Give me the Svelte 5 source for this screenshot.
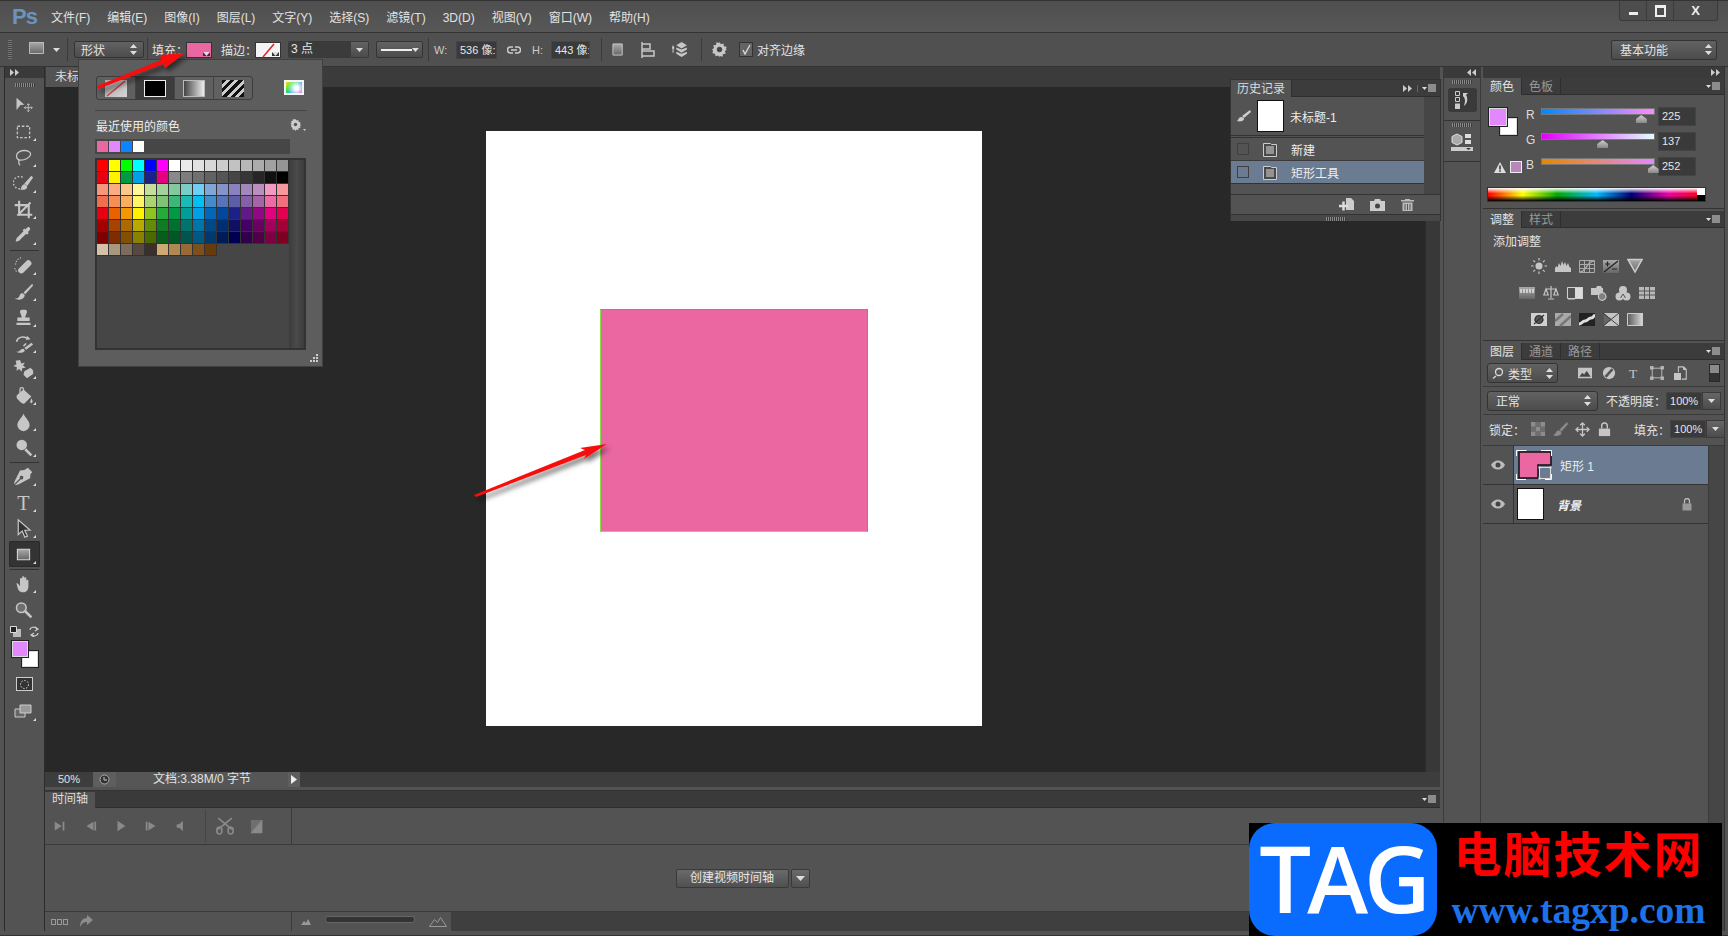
<script>
	const menus = ["文件(F)", "编辑(E)", "图像(I)", "图层(L)", "文字(Y)", "选择(S)", "滤镜(T)", "3D(D)", "视图(V)", "窗口(W)", "帮助(H)"];

	// toolbar icons, 24 box. f = filled path, s = stroked path
	const toolGroups = [
		[
			{ f: "M4 3L13 11L8.5 11.5L4 17Z", s: "M17.5 10v9M13 14.5h9M16 11.5l1.5-1.5 1.5 1.5M16 17.5l1.5 1.5 1.5-1.5M14.5 13l-1.5 1.5 1.5 1.5M20.5 13l1.5 1.5-1.5 1.5", w: 1 },
			{ s: "M5 6h14v13H5z", dash: "3 2", w: 1.5, mark: 1 },
			{ s: "M4 10c0-4 5-6 9-6s8 2 7 5-6 6-11 6-5-3-5-5zM6 14c2 2-1 4 2 7", w: 1.5, mark: 1 },
			{ s: "M11 5a7 7 0 1 0-3 13", dash: "2 2", w: 1.5, f: "M21 3L13 12l3 3L23 5zM10 15c2-3 5-3 6 0 1 3-3 5-8 4 2-1 1-3 2-4z", mark: 1 },
			{ s: "M7 2v16h15M2 7h16v15M20 4L5 19", w: 2.4, mark: 1 },
			{ f: "M16 3c2-2 5 1 3 3l-2 2 1 1-2 2-1-1-8 8-4 1 1-4 8-8-1-1 2-2 1 1z", mark: 1 }
		],
		[
			{ f: "M7 15L15 7a3.5 3.5 0 0 1 5 5L12 20a3.5 3.5 0 0 1-5-5z", s: "M3 11a8 8 0 0 1 7-8M4 19a8 8 0 0 1-2-4", dash: "1.5 1.5", w: 1.2, mark: 1 },
			{ f: "M22 3L12 13l2 2L23 5zM11 14c-3 0-3 2-4 4s-3 2-5 2c3 2 9 2 11-2 1-2 0-3-2-4z", mark: 1 },
			{ f: "M10 3h4a2 2 0 0 1 2 2c0 3-2 4-2 7h5v4H5v-4h5c0-3-2-4-2-7a2 2 0 0 1 2-2zM4 18h16v2.5H4z", mark: 1 },
			{ f: "M16 3l4 4-5 1zM21 11l2 2-8 6-2-2zM12 18c-2 0-3 1-4 2s-3 2-5 1c3 2 8 2 10 0 1-1 0-2-1-3z", s: "M4 10c1-5 7-7 12-4M15 12l-3 3", w: 1.8, mark: 1 },
			{ f: "M8 1l1.5 4 4-1-2 3.5 3 2.5-4 .5-.5 4-3-3-3 2 .5-4-4-1.5 3.5-2-1-4zM13 14l7-4 3 3v4l-7 5-4-4z", mark: 1 },
			{ f: "M5 11L12 5L21 13L13 21Q11 22 9 20L5 16Q3 13 5 11zM21 15c1 2 2 3 1 5-1 2-3 0-2-2z", s: "M8 9V5a2 2 0 0 1 4 0v4", mark: 1 },
			{ f: "M12 3c2 5 7 8 7 13a7 7 0 0 1-14 0c0-5 5-8 7-13z", mark: 1 },
			{ f: "M10 3a6 6 0 1 1 0 12a6 6 0 1 1 0-12z", s: "M14 14l7 7", w: 3, mark: 1 }
		],
		[
			{ f: "M17 2l5 5-2 2-.5 5L6 21l-4 1 7-7a2 2 0 1 0-1-1l-7 7 1-4 6-12 5-.5z", mark: 1 },
			{ t: "T", mark: 1 },
			{ s: "M6 2v17l4.5-4 3 7 3-1.3-3-6.7h6z", sf: "#333", w: 1.4, mark: 1 },
			{ f: "M5 6h14v12H5z", fc: "url(#gv)", s: "M5 6h14v12H5z", sc: "#d8d8d8", w: 1.2, mark: 1, active: 1 }
		],
		[
			{ f: "M4 12c1-1 2 0 4 3V7a1.2 1.2 0 0 1 2.4 0v4V5a1.2 1.2 0 0 1 2.4 0v6V6a1.2 1.2 0 0 1 2.4 0v6V9a1.2 1.2 0 0 1 2.4 0v6c0 4-2 7-6 7s-5-2-6-4z", mark: 1 },
			{ s: "M15 10a5.5 5.5 0 1 1-11 0a5.5 5.5 0 1 1 11 0z", sf: "#6e6e6e", w: 1.8, s2: "M14 14l7 7", w2: 3 }
		]
	];

	const adjustRows = [
		[
			{ f: "M8 4.5a3.5 3.5 0 1 1 0 7a3.5 3.5 0 1 1 0-7z", s: "M8 0v2.5M8 13.5V16M0 8h2.5M13.5 8H16M2.3 2.3l1.8 1.8M11.9 11.9l1.8 1.8M2.3 13.7l1.8-1.8M11.9 4.1l1.8-1.8", w: 1.2 },
			{ f: "M0 14V10l1.5-2 1 1.5L4 5l1.5 3L7 3l1.5 4L10 4l1.5 4L13 5l1.5 4L16 10v4z" },
			{ s: "M.5 2.5h15v12H.5zM5.5 2.5v12M10.5 2.5v12M.5 6.5h15M.5 10.5h15", w: 1, sc: "#aaa", s2: "M1 14c6 0 7-11 14-11", w2: 1.5 },
			{ f: "M0 2h16v13H0z", fc: "url(#gv)", s: "M2 6h5M4.5 3.5v5M9 11h5M1 14L15 3", sc: "#222", w: 1.2 },
			{ f: "M0 1h16L8 15z", fc: "url(#gv)", s: "M1 1.5h14L8 14z", sc: "#ccc", w: 1.5 }
		],
		[
			{ f: "M0 2h16v12H0z", fc: "url(#gv)", s: "M2 4v4M5 4v4M8 4v4M11 4v4M14 4v4", sc: "#e4e4e4", w: 1.5 },
			{ s: "M8 1v12M3 4h10M3 4L.8 10h4.4zM13 4l-2.2 6h4.4zM5 14h6", w: 1.2 },
			{ f: "M8 2h8v12H8z", fc: "#dcdcdc", s: "M.5 2.5h15v11H.5z", sf: "none", sc: "#d0d0d0", w: 1, s2: "M1 14h7", w2: 1 },
			{ f: "M0 3h5l1-2h4l1 2h1v7H0z", s: "M15 11.5a3.8 3.8 0 1 1-7.6 0a3.8 3.8 0 1 1 7.6 0z", sf: "#808080", sc: "#c6c6c6", w: 1.2 },
			{ f: "M8 1a4 4 0 1 1 0 8a4 4 0 1 1 0-8zM4.5 7.5a4 4 0 1 1 0 8a4 4 0 1 1 0-8zM11.5 7.5a4 4 0 1 1 0 8a4 4 0 1 1 0-8z", s: "M8 9L5.5 13M8 9l2.5 4", sc: "#555", w: 1 },
			{ f: "M0 2h16v12H0z", fc: "#b8b8b8", s: "M5.5 2v12M10.5 2v12M0 6h16M0 10h16", sc: "#555", w: 1 }
		],
		[
			{ f: "M0 2h16v13H0z", fc: "#d0d0d0", s: "M8 4.5a4 4 0 1 1-.1 0zM3 13L13 4", sf: "#555", sc: "#333", w: 1.2 },
			{ f: "M0 2h16v13H0z", fc: "#aaa", s: "M0 10L8 3M5 15L16 5", sc: "#777", w: 2.5 },
			{ f: "M0 2h16v13H0z", fc: "#222", s: "M0 13c3 0 3-3 6-3s3-3 6-3 2-2 4-3", sc: "#ddd", w: 3 },
			{ f: "M0 2h16v13H0z", fc: "#c4c4c4", s: "M0 2l16 13M16 2L0 15M0 2l8 6.5L0 15z", sf: "#666", sc: "#444", w: 1 },
			{ f: "M0 2h16v13H0z", fc: "url(#gh)", s: "M.5 2.5h15v12H.5z", sc: "#ccc", w: 1 }
		]
	];

	const swatchRows = [
		"#ff0000 #ffff00 #00ff00 #00ffff #0000ff #ff00ff #ffffff #ebebeb #e1e1e1 #d7d7d7 #cccccc #c2c2c2 #b7b7b7 #acacac #a1a1a1 #959595",
		"#e60012 #fff100 #009944 #00a0e9 #1d2088 #e4007f #898989 #7d7d7d #707070 #626262 #555555 #464646 #363636 #262626 #111111 #000000",
		"#f7977a #f9ad81 #fdc68a #fff79a #c4df9b #a2d39c #82ca9d #7bcdc8 #6ecff6 #7ea7d8 #8493ca #8882be #a187be #bc8dbf #f49ac2 #f6989d",
		"#f26c4f #f68e55 #fbaf5c #fff467 #acd372 #7cc576 #3bb878 #1abbb4 #00bff3 #438cca #5574b9 #5c5fa8 #855fa8 #a763a8 #ee6aa7 #f26d7d",
		"#e60012 #eb6100 #f39800 #fff100 #8fc31f #22ac38 #009944 #009e96 #00a0e9 #0068b7 #00479d #1d2088 #601986 #920783 #e4007f #e5004f",
		"#a40000 #a84200 #ac6a00 #b7aa00 #638c0b #0f7c25 #007130 #00736d #0075a9 #004986 #002e73 #100f64 #440062 #6a005f #a4005b #a40035",
		"#7f0000 #7f2d00 #825000 #8b8100 #4a6a00 #055e1a #005826 #00564f #005982 #00396b #001c58 #000050 #31004a #500047 #7e0043 #7d0022",
		"#d4c1a7 #a89880 #7d6b5b #574940 #3a302b #cfa972 #b08851 #996a35 #7f501f #693a0b"
	].map((r) => r.split(" "));

	const recents = ["#ea67a1", "#e189fc", "#0a84ff", "#ffffff"];

	const sliders = [
		{ label: "R", value: 225, cls: "sr" },
		{ label: "G", value: 137, cls: "sg" },
		{ label: "B", value: 252, cls: "sb" }
	];

	const filterIcons = [
		{ f: "M0 2h16v12H0z", fc: "#c4c4c4", s: "M2 12l3-4 2 2 3-4 4 6z", sf: "#444", sc: "#444", w: 0.5 },
		{ f: "M8 1a7 7 0 1 1 0 14a7 7 0 1 1 0-14z", s: "M12 3.5L4 12.5", sc: "#555", w: 3 },
		{ t: "T", small: 1 },
		{ s: "M2.5 2.5h11v11h-11z", w: 1, f: "M0 0h4v4H0zM12 0h4v4h-4zM0 12h4v4H0zM12 12h4v4h-4z", fc: "#b0b0b0" },
		{ f: "M0 8h8v8H0z", s: "M5 7V1h6l3 3v11H9M11 1v3h3", w: 1.2 }
	];

	const lockIcons = [
		{ f: "M0 0h5v5H0zM10 0h5v5h-5zM5 5h5v5H5zM0 10h5v5H0zM10 10h5v5h-5z", fc: "#8c8c8c", s: "M5 0h5v5H5zM0 5h5v5H0zM10 5h5v5h-5zM5 10h5v5H5z", sf: "#6e6e6e", sc: "none" },
		{ f: "M15 0L7 8l2 2 7-8zM6 9c-3 0-2 3-6 5 4 2 9 0 9-2 0-2-1-3-3-3z", fc: "#8c8c8c" },
		{ s: "M8 1v14M1 8h14M5.5 3.5L8 1l2.5 2.5M5.5 12.5L8 15l2.5-2.5M3.5 5.5L1 8l2.5 2.5M12.5 5.5L15 8l-2.5 2.5", w: 1.4 },
		{ f: "M2 7h12v8H2z", s: "M5 7V4a3 3 0 0 1 6 0v3", w: 1.5 }
	];

	const playIcons = [
		{ f: "M2 3l8 5-8 5zM11 3h2v10h-2z" },
		{ f: "M4 8l8-5v10zM13 3h2v10h-2z" },
		{ f: "M4 2l9 6-9 6z" },
		{ f: "M2 3h2v10H2zM5 3l8 5-8 5z" },
		{ f: "M2 6h3l4-4v12l-4-4H2z" }
	];

	const gray = "#8a8a8a";
</script>

{#snippet ico(i, size = 24, vb = 24)}
	<svg class="ico" width={size} height={size} viewBox="0 0 {vb} {vb}">
		{#if i.f}<path d={i.f} fill={i.fc || "#c6c6c6"} />{/if}
		{#if i.s}<path d={i.s} fill={i.sf || "none"} stroke={i.sc || "#c6c6c6"} stroke-width={i.w || 1.5} stroke-dasharray={i.dash} />{/if}
		{#if i.s2}<path d={i.s2} fill="none" stroke={i.sc || "#c6c6c6"} stroke-width={i.w2 || 1.5} />{/if}
		{#if i.t}<text x={vb / 2} y={vb * 0.84} text-anchor="middle" font-size={vb * 0.96} font-family="Liberation Serif, serif" fill="#c6c6c6">{i.t}</text>{/if}
	</svg>
{/snippet}

{#snippet panelMenu()}
	<svg class="panel-menu" width="14" height="8" viewBox="0 0 14 8">
		<path d="M0 3h5L2.5 6z" fill="#ddd" />
		<path d="M6 1h8M6 3h8M6 5h8M6 7h8" stroke="#ddd" stroke-width="1" />
	</svg>
{/snippet}

{#snippet caret()}
	<svg class="caret" width="7" height="4" viewBox="0 0 7 4"><path d="M0 0h7L3.5 4z" fill="#ddd" /></svg>
{/snippet}

{#snippet updown()}
	<svg class="updown" width="7" height="11" viewBox="0 0 7 11"><path d="M3.5 0L7 4H0zM0 7h7l-3.5 4z" fill="#ddd" /></svg>
{/snippet}

{#snippet dbl(left = false)}
	<svg width="9" height="7" viewBox="0 0 9 7">
		{#if left}
			<path d="M4 0v7L0 3.5zM9 0v7L5 3.5z" fill="#ccc" />
		{:else}
			<path d="M0 0v7l4-3.5zM5 0v7l4-3.5z" fill="#ccc" />
		{/if}
	</svg>
{/snippet}

{#snippet eye()}
	<svg width="14" height="10" viewBox="0 0 14 10"><path d="M0 5c3-6 11-6 14 0-3 6-11 6-14 0z" fill="#bbb" /><circle cx="7" cy="5" r="2.5" fill="#444" /></svg>
{/snippet}

{#snippet docIcon()}
	<svg class="doc-ic" width="14" height="15" viewBox="0 0 14 15">
		<path d="M.5 1.5h7l1 1h5v12H.5z" fill="#4a4a4a" stroke="#ccc" />
		<path d="M3 5h8M3 7h8M3 9h8M3 11h8" stroke="#ddd" />
	</svg>
{/snippet}

<div class="app">
	<header class="titlebar">
		<span class="ps">Ps</span>
		<nav class="menu">
			{#each menus as m}<span>{m}</span>{/each}
		</nav>
		<div class="winbtns">
			<span class="wb"><i class="min"></i></span>
			<span class="wb"><i class="max"></i></span>
			<span class="wb close">X</span>
		</div>
	</header>

	<div class="options">
		<span class="grip-v"></span>
		{@render ico({ f: "M0 0h15v12H0z", fc: "url(#gv)", s: "M.5.5h14v11H.5z", sc: "#bbb", w: 1 }, 15, 15)}
		<span class="m9">{@render caret()}</span>
		<span class="vline m7"></span>
		<span class="select shape-mode m6">形状{@render updown()}</span>
		<span class="vline m3"></span>
		<span class="lbl fill-lbl">填充：</span>
		<span class="swatch pink">{@render caret()}</span>
		<span class="lbl stroke-lbl">描边：</span>
		<span class="swatch none-swatch">
			<svg width="25" height="15" viewBox="0 0 25 15"><path d="M7 14L18 1" stroke="#e0202a" stroke-width="1.5" /></svg>
			{@render caret()}
		</span>
		<span class="combo">
			<span class="combo-text">3 点</span>
			<span class="combo-btn">{@render caret()}</span>
		</span>
		<span class="select line-select"><i class="line"></i>{@render caret()}</span>
		<span class="vline m5"></span>
		<span class="lbl wlabel">W:</span>
		<span class="numbox wbox">536 像:</span>
		<svg class="link" width="14" height="8" viewBox="0 0 14 8"><path d="M6 1H3.5a3 3 0 0 0 0 6H6M8 1h2.5a3 3 0 0 1 0 6H8M4 4h6" fill="none" stroke="#ccc" stroke-width="1.5" /></svg>
		<span class="lbl hlabel">H:</span>
		<span class="numbox hbox">443 像:</span>
		<span class="vline m11"></span>
		<span class="opt-ic first">{@render ico({ f: "M1 1h10v12H1z", fc: "url(#gv)", s: "M1 1h10v12H1z", sc: "#ccc", w: 1 }, 13, 14)}</span>
		<span class="opt-ic second">{@render ico({ s: "M2 0v16M2 2h8v5H2M2 9h12v5H2", w: 1.5 }, 16, 16)}</span>
		<span class="opt-ic third">{@render ico({ f: "M9 1l5 3-5 3-5-3zM9 8l5-2v2l-5 3-5-3V6zM9 12l5-2v2l-5 3-5-3v-2z", s: "M1 5v6M0 7l1-2 1 2", w: 1 }, 17, 16)}</span>
		<span class="vline gearline"></span>
		<span class="gear">{@render ico({ f: "M8 0l1.5 2.5 2.8-.8.4 2.9 2.9.4-.8 2.8L16 8l-2.2 1.7.8 2.8-2.9.4-.4 2.9-2.8-.8L8 16l-1.5-1.5-2.8.8-.4-2.9-2.9-.4.8-2.8L0 8l2.2-1.7-.8-2.8 2.9-.4.4-2.9 2.8.8z", s: "M10.5 8a2.5 2.5 0 1 1-5 0a2.5 2.5 0 1 1 5 0z", sf: "#444", sc: "#444", w: 1 }, 15, 16)}</span>
		<span class="check"><svg width="10" height="11" viewBox="0 0 10 11"><path d="M2 6l2 4 5-9" fill="none" stroke="#ddd" stroke-width="1.3" /></svg></span>
		<span class="lbl align-lbl">对齐边缘</span>
		<span class="select workspace-select">基本功能{@render updown()}</span>
	</div>

	<div class="workspace">
		<aside class="tools">
			<div class="dock-head left-head">{@render dbl()}</div>
			<div class="grip"></div>
			{#each toolGroups as group, g}
				{#if g > 0}<div class="tool-sep sep{g}"></div>{/if}
				{#each group as t}
					<div class="tool" class:active={t.active} class:mark={t.mark}>{@render ico(t, 21, 24)}</div>
				{/each}
			{/each}
			<div class="mini-row">
				<svg width="11" height="11" viewBox="0 0 11 11"><path d="M3 3h8v8H3z" fill="#bbb" /><path d="M.5.5h6v6h-6z" fill="#222" stroke="#ddd" /></svg>
				<svg width="11" height="11" viewBox="0 0 11 11"><path d="M1 4c0-3 5-4 7-1M9 7c0 2-3 4-6 2M6 1l3 2-3 2M5 7L2 9l3 2" fill="none" stroke="#ccc" stroke-width="1.2" /></svg>
			</div>
			<div class="colors">
				<div class="bg-color"></div>
				<div class="fg-color"></div>
			</div>
			<div class="mask">
				<svg width="13" height="11" viewBox="0 0 13 11"><circle cx="6.5" cy="5.5" r="4" fill="none" stroke="#ddd" stroke-dasharray="1.5 1.5" /></svg>
			</div>
			<div class="tool mark screen-mode">
				<svg width="18" height="14" viewBox="0 0 18 14"><path d="M1 5h10v8H1z" fill="#666" stroke="#ccc" /><path d="M6 1h11v8H6z" fill="#999" stroke="#ccc" /></svg>
			</div>
		</aside>

		<div class="center">
			<div class="doc-tabs"><div class="doc-tab">未标题-1</div></div>
			<div class="doc-row">
				<div class="canvas-area">
					<div class="page"><div class="rect"></div></div>
				</div>
				<div class="vscroll"></div>
			</div>
			<div class="status">
				<span class="zoomval">50%</span>
				<span class="status-ic">
					<svg width="11" height="11" viewBox="0 0 11 11"><circle cx="5.5" cy="5.5" r="4.5" fill="#333" stroke="#aaa" /><path d="M5 3v3h3" stroke="#ccc" fill="none" /></svg>
				</span>
				<span class="docinfo">文档:3.38M/0 字节</span>
				<span class="status-arrow"><svg width="6" height="9" viewBox="0 0 6 9"><path d="M0 0l6 4.5L0 9z" fill="#eee" /></svg></span>
			</div>
			<section class="timeline">
				<div class="tl-tabs"><span class="tl-tab">时间轴</span>{@render panelMenu()}</div>
				<div class="tl-controls">
					<div class="tl-play">
						{#each playIcons as p}
							<span class="tl-btn">{@render ico({ ...p, fc: gray }, 14, 16)}</span>
						{/each}
					</div>
					<div class="tl-edit">
						{@render ico({ s: "M2 1l12 10M14 1L2 11M5 12a2.2 2.2 0 1 1-4 0a2.2 2.2 0 1 1 4 0zM15 12a2.2 2.2 0 1 1-4 0a2.2 2.2 0 1 1 4 0z", sc: gray, w: 1.5 }, 18, 16)}
						{@render ico({ f: "M2 1h12v14H2z", fc: "#6f6f6f", s: "M2 15L14 1V15z", sf: gray, sc: gray, w: 0.5 }, 15, 16)}
					</div>
				</div>
				<div class="tl-body">
					<span class="tl-create">创建视频时间轴</span>
					<span class="tl-drop"><svg width="9" height="5" viewBox="0 0 9 5"><path d="M0 0h9L4.5 5z" fill="#ddd" /></svg></span>
				</div>
				<div class="tl-foot">
					<div class="tl-foot-left">
						<span class="frames"><i></i><i></i><i></i></span>
						<svg width="14" height="13" viewBox="0 0 14 13"><path d="M8 0l6 5-6 5V7C5 7 3 8 1 12 1 7 3 3 8 3z" fill="#8d8d8d" /></svg>
					</div>
					<div class="tl-foot-zoom">
						<svg width="10" height="6" viewBox="0 0 10 6"><path d="M0 6l3-4 2 2 2-4 3 6z" fill="#999" /></svg>
						<span class="zoomtrack"></span>
						<svg width="18" height="10" viewBox="0 0 18 10"><path d="M.5 9.5l5-7 3 3 3-5 6 9z" fill="none" stroke="#999" /></svg>
					</div>
				</div>
			</section>
		</div>

		<div class="iconcol">
			<div class="dock-head col-head">{@render dbl(true)}</div>
			<div class="icon-group">
				<div class="grip small"></div>
				<div class="icon-btn">
					<svg width="20" height="20" viewBox="0 0 20 20">
						<path d="M3.5 1.5h4v4h-4zM3.5 7.5h4v4h-4z" fill="none" stroke="#ccc" />
						<path d="M3 13.5h5V19H3z" fill="#ccc" />
						<path d="M11 3h5l-2 2c2 3 2 8-2 11 1-4 2-7-1-10z" fill="#ccc" />
					</svg>
				</div>
			</div>
			<div class="icon-group second-group">
				<div class="grip small"></div>
				<div class="icon-plain">
					<svg width="24" height="18" viewBox="0 0 24 18">
						<path d="M7 1l5 2.5v6L7 12l-5-2.5v-6z" fill="#aaa" stroke="#ddd" />
						<path d="M15 1h6v4h-6zM15 7h6v4h-6z" fill="#ddd" />
						<path d="M1 14h22v4H1z" fill="#ccc" />
						<path d="M16 15h5l-2.5 2z" fill="#333" />
					</svg>
				</div>
			</div>
		</div>

		<div class="panels">
			<div class="dock-head right-head">{@render dbl()}</div>

			<section class="panel color-panel">
				<div class="tabs">
					<span class="tab on">颜色</span><span class="tab">色板</span>
					{@render panelMenu()}
				</div>
				<div class="color-body">
					<div class="color-chips">
						<div class="chip-bg"></div>
						<div class="chip-fg"></div>
						<div class="warn">
							<svg width="12" height="11" viewBox="0 0 12 11"><path d="M6 0l6 11H0z" fill="#ddd" /><path d="M5.3 3.5h1.4v4H5.3zM5.3 8.3h1.4v1.4H5.3z" fill="#222" /></svg>
							<i class="gamut"></i>
						</div>
					</div>
					<div class="slider-list">
						{#each sliders as s}
							<div class="slider-row">
								<span class="slabel">{s.label}</span>
								<div class="strack {s.cls}">
									<i class="thumb" style="left: {(s.value / 255) * 100}%"></i>
								</div>
								<span class="numbox sval">{s.value}</span>
							</div>
						{/each}
					</div>
				</div>
				<div class="spectrum"><i></i></div>
			</section>

			<section class="panel adjust-panel">
				<div class="tabs">
					<span class="tab on">调整</span><span class="tab">样式</span>
					{@render panelMenu()}
				</div>
				<div class="adjust-title">添加调整</div>
				{#each adjustRows as row}
					<div class="adjust-row">
						{#each row as a}{@render ico(a, 16, 16)}{/each}
					</div>
				{/each}
			</section>

			<section class="panel layers-panel">
				<div class="tabs">
					<span class="tab on">图层</span><span class="tab">通道</span><span class="tab">路径</span>
					{@render panelMenu()}
				</div>
				<div class="layer-filter">
					<span class="select filter-select">
						<svg width="12" height="12" viewBox="0 0 12 12"><path d="M4 9L1 11.5M10.5 5a3.5 3.5 0 1 1-7 0a3.5 3.5 0 1 1 7 0z" fill="none" stroke="#ddd" stroke-width="1.3" /></svg>
						<span class="grow">类型</span>{@render updown()}
					</span>
					<div class="filter-icons">
						{#each filterIcons as f}{@render ico(f, 14, 16)}{/each}
					</div>
					<span class="filter-toggle"><i></i></span>
				</div>
				<div class="layer-blend">
					<span class="select blend-select"><span class="grow">正常</span>{@render updown()}</span>
					<span class="lbl">不透明度：</span>
					<span class="pct"><span class="numbox">100%</span><span class="pct-btn">{@render caret()}</span></span>
				</div>
				<div class="layer-lock">
					<span class="lbl">锁定：</span>
					<div class="lock-icons">
						{#each lockIcons as l}{@render ico(l, 15, 16)}{/each}
					</div>
					<span class="lbl fill-right">填充：</span>
					<span class="pct"><span class="numbox">100%</span><span class="pct-btn">{@render caret()}</span></span>
				</div>
				<div class="layer-list">
					<div class="layer-col">
						<div class="layer selected">
							<span class="eye">{@render eye()}</span>
							<span class="thumb-shape">
								<svg width="36" height="30" viewBox="0 0 36 30">
									<path d="M3 2h32v13H22v13H3z" fill="#ea67a1" stroke="#111" stroke-width="1.5" />
									<path d="M.5 6V.5h10M25 .5h10.5V6M35.5 24v5.5H29M10 29.5H.5V24" fill="none" stroke="#fff" />
									<path d="M23.5 17.5h11v11h-11z" fill="#6a7b92" stroke="#ddd" />
									<path d="M22.5 16.5h2v2h-2zM33.5 16.5h2v2h-2zM22.5 27.5h2v2h-2zM33.5 27.5h2v2h-2z" fill="#ddd" />
								</svg>
							</span>
							<span class="layer-name">矩形 1</span>
						</div>
						<div class="layer">
							<span class="eye">{@render eye()}</span>
							<span class="thumb-white"></span>
							<span class="layer-name italic">背景</span>
							<svg class="layer-lock-ic" width="10" height="13" viewBox="0 0 10 13"><path d="M.5 5.5h9v7h-9z" fill="#999" /><path d="M2.5 5.5V3a2.5 2.5 0 0 1 5 0v2.5" fill="none" stroke="#bbb" stroke-width="1.3" /></svg>
						</div>
					</div>
					<div class="layer-scroll"></div>
				</div>
			</section>
		</div>
	</div>

	<section class="history">
		<div class="tabs">
			<span class="tab on">历史记录</span>
			<span class="hist-arrows">{@render dbl()}</span>
			{@render panelMenu()}
		</div>
		<div class="hist-main">
			<div class="hist-list">
				<div class="hist-doc">
					<svg width="14" height="12" viewBox="0 0 14 12"><path d="M13 0L5 6l2 2 7-6zM4 7c-2 0-2 2-4 4 3 1 7 0 7-2 0-1-1-2-3-2z" fill="#ccc" /></svg>
					<span class="hist-thumb"></span>
					<span>未标题-1</span>
				</div>
				<div class="hist-row">
					<i class="hist-check"></i>{@render docIcon()}<span>新建</span>
				</div>
				<div class="hist-row current">
					<i class="hist-check"></i>{@render docIcon()}<span>矩形工具</span>
				</div>
			</div>
			<div class="hist-scroll"></div>
		</div>
		<div class="hist-foot">
			<svg width="15" height="13" viewBox="0 0 15 13"><path d="M7 0h5l3 3v9H7z" fill="#ccc" /><path d="M0 8h9M4.5 3.5v9" stroke="#ddd" stroke-width="2.5" /></svg>
			<svg width="15" height="12" viewBox="0 0 15 12"><path d="M0 2h4l1-2h5l1 2h4v10H0z" fill="#ccc" /><circle cx="7.5" cy="7" r="2.5" fill="#444" /></svg>
			<svg width="13" height="13" viewBox="0 0 13 13"><path d="M4 1h5v1h4v1.5H0V2h4zM1.5 4.5h10V13h-10z" fill="#bbb" /><path d="M4 6v6M6.5 6v6M9 6v6" stroke="#555" /></svg>
		</div>
		<div class="hist-grip"><div class="grip small"></div></div>
	</section>

	<section class="popup">
		<div class="fill-types">
			<span class="ft"><i class="ft-none"><svg width="22" height="17" viewBox="0 0 22 17"><path d="M2 16L20 1" stroke="#e0303a" stroke-width="1.2" /></svg></i></span>
			<span class="ft on"><i class="ft-solid"></i></span>
			<span class="ft"><i class="ft-grad"></i></span>
			<span class="ft"><i class="ft-pat"></i></span>
			<i class="ft-picker"></i>
		</div>
		<div class="pop-title">
			<span>最近使用的颜色</span>
			<svg class="pop-gear" width="16" height="12" viewBox="0 0 16 12"><path d="M5.5 0l1 1.5 1.8-.5.3 1.9 1.9.3-.5 1.8 1 1-1 1 .5 1.8-1.9.3-.3 1.9-1.8-.5-1 1.5-1-1.5-1.8.5-.3-1.9L1 7.6l.5-1.8L.5 5l1-1-.5-1.8L2.6 2l.3-1.9 1.8.5z" fill="#ccc" /><circle cx="5.5" cy="5.5" r="1.7" fill="#555" /><path d="M13 10h3l-1.5 2z" fill="#ccc" /></svg>
		</div>
		<div class="recent">
			{#each recents as c}<i style="background: {c}"></i>{/each}
		</div>
		<div class="swatch-box">
			<div class="swatch-grid">
				{#each swatchRows as row}
					{#each row as c}<i style="background: {c}"></i>{/each}
				{/each}
			</div>
			<div class="swatch-scroll"></div>
		</div>
		<svg class="pop-grip" width="9" height="9" viewBox="0 0 9 9"><path d="M6 0h2v2H6zM3 3h2v2H3zM6 3h2v2H6zM0 6h2v2H0zM3 6h2v2H3zM6 6h2v2H6z" fill="#ccc" /></svg>
	</section>

	<svg class="arrows" width="1728" height="936" viewBox="0 0 1728 936">
		<defs>
			<linearGradient id="gv" x1="0" y1="0" x2="0" y2="1"><stop offset="0" stop-color="#aaa" /><stop offset="1" stop-color="#666" /></linearGradient>
			<linearGradient id="gh" x1="0" y1="0" x2="1" y2="0"><stop offset="0" stop-color="#555" /><stop offset="1" stop-color="#ddd" /></linearGradient>
			<filter id="shadow" x="-20%" y="-40%" width="140%" height="200%"><feDropShadow dx="3" dy="4" stdDeviation="2.5" flood-color="#000" flood-opacity="0.55" /></filter>
		</defs>
		<path class="red" d="M97 86L161 60L160 55L185 53L165 68L163 64L98 89Z" />
		<path class="red" d="M474 495L585 450L580 448L607 444L584 459L586 455L476 497Z" />
	</svg>

	<aside class="watermark">
		<div class="wm-logo">TAG</div>
		<div class="wm-text">
			<div class="wm-cn">电脑技术网</div>
			<div class="wm-url">www.tagxp.com</div>
		</div>
	</aside>
</div>

<style>
	:global(body) {
		margin: 0;
		background: #535353;
	}

	.app {
		position: relative;
		width: 1728px;
		height: 936px;
		overflow: hidden;
		display: flex;
		flex-direction: column;
		background: #535353;
		color: #e6e6e6;
		font: 12px "Liberation Sans", "Noto Sans CJK SC", sans-serif;
	}

	i {
		display: block;
		font-style: normal;
	}

	.ico {
		display: block;
		flex: none;
	}

	/* title bar */
	.titlebar {
		flex: none;
		height: 31px;
		display: flex;
		align-items: center;
		border-top: 1px solid #333;
		border-bottom: 1px solid #333;
		background: linear-gradient(#4f4f4f, #575757);
		position: relative;
	}

	.ps {
		margin-left: 12px;
		font: bold 22px "Liberation Sans", sans-serif;
		letter-spacing: -1px;
		color: #6c93bd;
		width: 39px;
	}

	.menu {
		display: flex;
		align-items: baseline;
		gap: 17px;
		color: #e2e2e2;
	}

	.winbtns {
		margin-left: auto;
		margin-right: 10px;
		align-self: flex-start;
		display: flex;
		height: 20px;
		width: 99px;
		background: #4d4d4d;
		border: 1px solid #3a3a3a;
		border-top: none;
		border-radius: 0 0 3px 3px;
		box-sizing: border-box;
	}

	.wb {
		flex: 0 0 26px;
		display: flex;
		align-items: center;
		justify-content: center;
		border-right: 1px solid #3c3c3c;
		color: #eee;
		font-weight: bold;
		font-size: 13px;
	}

	.wb.close {
		flex: 1;
		border: none;
	}

	.min {
		width: 9px;
		height: 3px;
		background: #eee;
		margin-top: 6px;
	}

	.max {
		width: 7px;
		height: 7px;
		border: 2px solid #eee;
		border-top-width: 3px;
	}

	/* options bar */
	.options {
		height: 33px;
		flex: none;
		display: flex;
		align-items: center;
		background: #505050;
		border-bottom: 1px solid #333;
		position: relative;
	}

	.grip-v {
		width: 4px;
		height: 19px;
		margin: 0 17px 0 8px;
		background: repeating-linear-gradient(#777 0 1px, #444 1px 2px);
	}

	.m9 {
		margin-left: 9px;
		display: flex;
	}

	.vline {
		width: 1px;
		height: 23px;
		background: #3a3a3a;
		flex: none;
	}

	.m7 {
		margin-left: 7px;
	}

	.m6 {
		margin-left: 6px;
	}

	.m5 {
		margin-left: 5px;
	}

	.m3 {
		margin-left: 3px;
	}

	.m11 {
		margin-left: 11px;
	}

	.select {
		display: flex;
		align-items: center;
		justify-content: space-between;
		box-sizing: border-box;
		height: 17px;
		padding: 0 6px;
		background: linear-gradient(#626262, #4c4c4c);
		border: 1px solid #333;
		border-radius: 2px;
		color: #e2e2e2;
		flex: none;
	}

	.grow {
		flex: 1;
	}

	.shape-mode {
		width: 70px;
	}

	.lbl {
		color: #e2e2e2;
		white-space: nowrap;
	}

	.fill-lbl {
		margin-left: 4px;
		width: 34px;
	}

	.stroke-lbl {
		margin-left: 9px;
		width: 34px;
	}

	.swatch {
		position: relative;
		width: 26px;
		height: 16px;
		border: 1px solid #333;
		box-sizing: border-box;
		flex: none;
	}

	.swatch.pink {
		background: #ea67a1;
	}

	.none-swatch {
		background: #f4f4f4;
	}

	.none-swatch svg:first-child {
		display: block;
	}

	.swatch .caret {
		position: absolute;
		right: 1px;
		bottom: 1px;
		background: #333;
	}

	.combo {
		margin-left: 7px;
		display: flex;
		width: 81px;
		height: 17px;
		flex: none;
		border: 1px solid #3a3a3a;
		box-sizing: border-box;
		border-radius: 2px;
	}

	.combo-text {
		width: 60px;
		background: #3b3b3b;
		padding-left: 2px;
		line-height: 15px;
	}

	.combo-btn {
		flex: 1;
		background: linear-gradient(#626262, #4c4c4c);
		display: flex;
		align-items: center;
		justify-content: center;
	}

	.line-select {
		margin-left: 7px;
		width: 47px;
		padding: 0 3px 0 4px;
	}

	.line {
		height: 2px;
		width: 32px;
		background: #eee;
	}

	.wlabel {
		margin-left: 5px;
		width: 22px;
		font-size: 11px;
		color: #ccc;
	}

	.numbox {
		display: block;
		background: #3a3a3a;
		box-sizing: border-box;
		color: #e6e6e6;
		font-size: 11px;
		flex: none;
		border: 1px solid #444;
		overflow: hidden;
		white-space: nowrap;
	}

	.wbox {
		width: 41px;
		height: 18px;
		line-height: 16px;
		padding-left: 3px;
	}

	.hbox {
		width: 39px;
		height: 18px;
		line-height: 16px;
		padding-left: 3px;
	}

	.link {
		margin: 0 0 0 10px;
		flex: none;
	}

	.hlabel {
		margin-left: 11px;
		width: 19px;
		font-size: 11px;
		color: #ccc;
	}

	.opt-ic {
		flex: none;
		display: block;
	}

	.opt-ic.first {
		margin-left: 10px;
	}

	.opt-ic.second {
		margin-left: 15px;
	}

	.opt-ic.third {
		margin-left: 16px;
	}

	.gearline {
		margin-left: 12px;
	}

	.gear {
		margin-left: 10px;
		display: block;
	}

	.check {
		margin-left: 12px;
		width: 12px;
		height: 13px;
		border: 1px solid #333;
		background: #646464;
		flex: none;
		display: flex;
		align-items: center;
		justify-content: center;
	}

	.align-lbl {
		margin-left: 4px;
	}

	.workspace-select {
		margin-left: auto;
		margin-right: 11px;
		width: 106px;
		height: 20px;
		padding: 0 4px 0 8px;
	}

	/* main area */
	.workspace {
		flex: 1;
		min-height: 0;
		display: flex;
		padding: 0 4px 4px 4px;
		box-sizing: border-box;
		border-bottom: 1px solid #333;
	}

	.tools {
		width: 39px;
		flex: none;
		display: flex;
		flex-direction: column;
		align-items: center;
		border-left: 1px solid #2c2c2c;
		border-right: 1px solid #2c2c2c;
		background: #535353;
	}

	.dock-head {
		height: 11px;
		background: #3a3a3a;
		align-self: stretch;
		display: flex;
		align-items: center;
		flex: none;
	}

	.left-head {
		padding-left: 5px;
	}

	.col-head {
		justify-content: flex-end;
		padding-right: 4px;
	}

	.grip {
		height: 4px;
		width: 20px;
		margin: 5px 0 5px;
		flex: none;
		background: repeating-linear-gradient(90deg, #888 0 1px, #3c3c3c 1px 2px);
	}

	.grip.small {
		margin: 2px auto 0;
	}

	.tool {
		position: relative;
		flex: none;
		width: 31px;
		height: 26px;
		box-sizing: border-box;
		padding-right: 3px;
		display: flex;
		align-items: center;
		justify-content: center;
	}

	.tool.mark::after {
		content: "";
		position: absolute;
		right: 4px;
		bottom: 3px;
		border-left: 3px solid transparent;
		border-bottom: 3px solid #ddd;
	}

	.tool.active {
		background: #333;
		border-radius: 2px;
		box-shadow: inset 0 0 0 1px #2a2a2a;
	}

	.tool-sep {
		width: 29px;
		flex: none;
		border-top: 1px solid #333;
		box-sizing: border-box;
		margin-top: 2px;
	}

	.sep1 {
		height: 2px;
	}

	.sep2 {
		height: 1px;
	}

	.sep3 {
		height: 0;
		margin-top: 2px;
	}

	.mini-row {
		width: 30px;
		display: flex;
		justify-content: space-between;
		margin-top: 4px;
		flex: none;
	}

	.colors {
		position: relative;
		width: 28px;
		height: 28px;
		margin-top: 3px;
		flex: none;
	}

	.fg-color,
	.bg-color {
		position: absolute;
		width: 18px;
		height: 18px;
		box-sizing: border-box;
		border: 1px solid #222;
		outline: 1px solid #ddd;
		outline-offset: -2px;
	}

	.fg-color {
		left: 0;
		top: 0;
		background: #e189fc;
	}

	.bg-color {
		right: 0;
		bottom: 0;
		background: #fff;
	}

	.mask {
		margin-top: 9px;
		width: 17px;
		height: 14px;
		border: 1px solid #ccc;
		box-sizing: border-box;
		background: #333;
		display: flex;
		align-items: center;
		justify-content: center;
		flex: none;
	}

	.screen-mode {
		margin-top: 7px;
	}

	.center {
		width: 1395px;
		flex: none;
		display: flex;
		flex-direction: column;
		margin-right: 3px;
	}

	.doc-tabs {
		height: 20px;
		flex: none;
		background: #3b3b3b;
		display: flex;
		padding-left: 1px;
	}

	.doc-tab {
		width: 120px;
		background: #535353;
		line-height: 20px;
		padding-left: 9px;
		box-sizing: border-box;
		color: #ddd;
	}

	.doc-row {
		height: 685px;
		flex: none;
		display: flex;
	}

	.canvas-area {
		flex: 1;
		background: #282828;
		display: flex;
		align-items: center;
		justify-content: center;
		box-sizing: border-box;
		padding: 0 2px 2px 0;
	}

	.page {
		width: 496px;
		height: 595px;
		background: #fff;
		box-sizing: border-box;
		padding: 178px 114px 194px 114px;
	}

	.rect {
		height: 100%;
		background: #ea67a1;
		box-sizing: border-box;
		border-style: solid;
		border-width: 1px;
		border-color: #8a8a8a #8a8a8a #86e04a #86e04a;
	}

	.vscroll {
		width: 15px;
		background: #383838;
		border-left: 1px solid #2c2c2c;
		box-sizing: border-box;
	}

	.status {
		height: 15px;
		flex: none;
		display: flex;
		background: #3d3d3d;
		align-items: stretch;
		color: #e2e2e2;
		font-size: 11px;
		line-height: 15px;
	}

	.zoomval {
		width: 48px;
		text-align: center;
	}

	.status-ic {
		width: 23px;
		background: #5e5e5e;
		display: flex;
		align-items: center;
		justify-content: center;
	}

	.docinfo {
		width: 172px;
		text-align: center;
		background: #565656;
		font-size: 12px;
	}

	.status-arrow {
		width: 12px;
		background: #5e5e5e;
		display: flex;
		align-items: center;
		justify-content: center;
	}

	.timeline {
		margin-top: 3px;
		height: 141px;
		flex: none;
		display: flex;
		flex-direction: column;
		background: #535353;
		border-top: 1px solid #333;
		box-sizing: border-box;
	}

	.tl-tabs {
		height: 16px;
		flex: none;
		display: flex;
		background: #3a3a3a;
		align-items: center;
		border-bottom: 1px solid #2e2e2e;
	}

	.tl-tab {
		width: 50px;
		height: 16px;
		line-height: 15px;
		text-align: center;
		background: #535353;
		color: #ddd;
		margin-bottom: -1px;
	}

	.panel-menu {
		margin-left: auto;
		margin-right: 4px;
		flex: none;
	}

	.tl-controls {
		height: 36px;
		flex: none;
		display: flex;
		border-bottom: 1px solid #3a3a3a;
	}

	.tl-play {
		width: 161px;
		display: flex;
		align-items: center;
		padding-left: 8px;
		box-sizing: border-box;
		border-right: 1px solid #444;
		margin: 2px 0;
	}

	.tl-btn {
		width: 32px;
		display: flex;
		justify-content: flex-start;
	}

	.tl-edit {
		width: 86px;
		box-sizing: border-box;
		display: flex;
		align-items: center;
		gap: 15px;
		padding-left: 10px;
		border-right: 1px solid #3a3a3a;
	}

	.tl-body {
		flex: 1;
		display: flex;
		align-items: center;
		justify-content: center;
		gap: 2px;
	}

	.tl-create {
		width: 113px;
		height: 19px;
		box-sizing: border-box;
		border: 1px solid #3a3a3a;
		border-radius: 2px;
		background: linear-gradient(#6a6a6a, #505050);
		text-align: center;
		line-height: 17px;
		color: #e6e6e6;
	}

	.tl-drop {
		width: 19px;
		height: 19px;
		box-sizing: border-box;
		border: 1px solid #3a3a3a;
		border-radius: 2px;
		background: linear-gradient(#6a6a6a, #505050);
		display: flex;
		align-items: center;
		justify-content: center;
	}

	.tl-foot {
		height: 19px;
		flex: none;
		display: flex;
		background: #3f3f3f;
		border-top: 1px solid #3a3a3a;
	}

	.tl-foot-left {
		width: 247px;
		display: flex;
		align-items: center;
		gap: 11px;
		padding-left: 6px;
		box-sizing: border-box;
		background: #535353;
		border-right: 1px solid #3a3a3a;
	}

	.frames {
		display: flex;
		gap: 1px;
	}

	.frames i {
		width: 5px;
		height: 6px;
		box-sizing: border-box;
		border: 1px solid #999;
	}

	.tl-foot-zoom {
		width: 159px;
		background: #535353;
		display: flex;
		align-items: center;
		gap: 14px;
		padding-left: 9px;
		box-sizing: border-box;
	}

	.zoomtrack {
		width: 88px;
		height: 5px;
		background: #333;
		border: 1px solid #666;
		border-radius: 3px;
		margin-top: -4px;
	}

	.iconcol {
		width: 38px;
		flex: none;
		box-sizing: border-box;
		margin-right: 2px;
		display: flex;
		flex-direction: column;
		border-left: 1px solid #3a3a3a;
		border-right: 1px solid #3a3a3a;
	}

	.icon-group {
		height: 42px;
		border-bottom: 1px solid #333;
	}

	.icon-group.second-group {
		height: 40px;
	}

	.icon-btn {
		width: 29px;
		height: 24px;
		margin: 4px auto 0;
		background: #3a3a3a;
		border-radius: 3px;
		display: flex;
		align-items: center;
		justify-content: center;
	}

	.icon-plain {
		display: flex;
		justify-content: center;
		margin-top: 6px;
	}

	.panels {
		width: 241px;
		flex: none;
		display: flex;
		flex-direction: column;
		border-right: 1px solid #333;
	}

	.right-head {
		justify-content: flex-end;
		padding-right: 4px;
	}

	.panel {
		flex: none;
		box-sizing: border-box;
		border-bottom: 1px solid #333;
	}

	.tabs {
		display: flex;
		height: 17px;
		align-items: center;
		background: #3c3c3c;
		border-bottom: 1px solid #2e2e2e;
		box-sizing: border-box;
		flex: none;
	}

	.tab {
		height: 17px;
		padding: 0 7px;
		line-height: 18px;
		color: #999;
		border-right: 1px solid #2e2e2e;
		box-sizing: border-box;
		flex: none;
	}

	.tab.on {
		background: #535353;
		color: #e2e2e2;
	}

	.color-panel {
		height: 131px;
		margin-top: 0;
	}

	.color-body {
		display: flex;
		height: 92px;
		position: relative;
	}

	.color-chips {
		position: relative;
		width: 43px;
		flex: none;
	}

	.chip-fg,
	.chip-bg {
		position: absolute;
		box-sizing: border-box;
		border: 1px solid #222;
		outline: 1px solid #ddd;
		outline-offset: -2px;
	}

	.chip-fg {
		left: 5px;
		top: 12px;
		width: 20px;
		height: 20px;
		background: #e189fc;
	}

	.chip-bg {
		left: 16px;
		top: 22px;
		width: 19px;
		height: 19px;
		background: #fff;
	}

	.warn {
		position: absolute;
		left: 11px;
		top: 66px;
		display: flex;
		align-items: center;
		gap: 4px;
	}

	.gamut {
		width: 12px;
		height: 12px;
		background: #b888bb;
		border: 1px solid #eee;
		box-sizing: border-box;
	}

	.slider-list {
		flex: 1;
		padding-top: 12px;
		display: flex;
		flex-direction: column;
		gap: 6px;
	}

	.slider-row {
		display: flex;
		height: 19px;
		align-items: flex-start;
	}

	.slabel {
		width: 16px;
		line-height: 17px;
		color: #ddd;
	}

	.strack {
		position: relative;
		width: 112px;
		height: 5px;
		margin-top: 2px;
		outline: 1px solid #777;
	}

	.sr {
		background: linear-gradient(90deg, #0089fc, #ff89fc);
	}

	.sg {
		background: linear-gradient(90deg, #e100fc, #e1fffc);
	}

	.sb {
		background: linear-gradient(90deg, #e18900, #e189ff);
	}

	.thumb {
		position: absolute;
		top: 6px;
		width: 11px;
		height: 8px;
		margin-left: -5px;
		background: linear-gradient(#cfcfcf, #888);
		clip-path: polygon(50% 0, 100% 50%, 100% 100%, 0 100%, 0 50%);
	}

	.sval {
		margin-left: 4px;
		width: 38px;
		height: 19px;
		line-height: 17px;
		padding-left: 3px;
	}

	.spectrum {
		position: relative;
		margin: 0 0 0 4px;
		width: 219px;
		height: 15px;
		box-sizing: border-box;
		border: 1px solid #333;
		background:
			linear-gradient(#fff, transparent 42%, transparent 58%, #000),
			linear-gradient(90deg, #f00, #ff0 16%, #0a0 32%, #0bf 50%, #007 66%, #e0a 83%, #f00);
	}

	.spectrum i {
		position: absolute;
		right: 0;
		top: 0;
		bottom: 0;
		width: 8px;
		background: linear-gradient(#fff 50%, #000 50%);
	}

	.adjust-panel {
		margin-top: 2px;
		height: 130px;
		display: flex;
		flex-direction: column;
	}

	.adjust-title {
		padding: 6px 0 0 10px;
		height: 19px;
		line-height: 16px;
		color: #e2e2e2;
		flex: none;
	}

	.adjust-row {
		display: flex;
		justify-content: center;
		gap: 8px;
		height: 26.5px;
		align-items: center;
		flex: none;
		padding-right: 34px;
	}

	.layers-panel {
		margin-top: 2px;
		flex: 1;
		border-bottom: none;
		display: flex;
		flex-direction: column;
	}

	.layer-filter {
		height: 27px;
		flex: none;
		display: flex;
		align-items: center;
		padding-left: 4px;
		border-bottom: 1px solid #3a3a3a;
		box-sizing: border-box;
	}

	.filter-select {
		width: 71px;
		height: 20px;
		gap: 4px;
		padding: 0 4px;
		border-radius: 3px;
	}

	.filter-icons {
		display: flex;
		gap: 10px;
		margin-left: 20px;
	}

	.filter-toggle {
		margin-left: 21px;
		width: 9px;
		height: 16px;
		background: #333;
		border: 1px solid #2a2a2a;
	}

	.filter-toggle i {
		height: 8px;
		background: #8a8a8a;
	}

	.layer-blend,
	.layer-lock {
		display: flex;
		align-items: center;
		flex: none;
		padding-left: 4px;
		border-bottom: 1px solid #3a3a3a;
		box-sizing: border-box;
	}

	.layer-blend {
		height: 28px;
	}

	.layer-lock {
		height: 31px;
		padding-left: 6px;
		padding-bottom: 2px;
	}

	.blend-select {
		width: 111px;
		height: 20px;
		padding-left: 8px;
		margin-right: 8px;
		border-radius: 3px;
	}

	.pct {
		margin-left: auto;
		margin-right: 6px;
		display: flex;
		height: 18px;
		flex: none;
	}

	.pct .numbox {
		width: 36px;
		height: 18px;
		line-height: 16px;
		padding-left: 3px;
		font-size: 11px;
	}

	.pct-btn {
		width: 19px;
		background: linear-gradient(#666, #4c4c4c);
		border: 1px solid #3a3a3a;
		box-sizing: border-box;
		display: flex;
		align-items: center;
		justify-content: center;
	}

	.lock-icons {
		display: flex;
		gap: 7px;
		margin-left: 6px;
	}

	.fill-right {
		margin-left: 22px;
	}

	.layer-list {
		flex: 1;
		display: flex;
	}

	.layer-col {
		width: 225px;
		flex: none;
	}

	.layer {
		position: relative;
		display: flex;
		align-items: center;
		height: 39px;
		border-bottom: 1px solid #333;
		box-sizing: border-box;
	}

	.eye {
		width: 31px;
		flex: none;
		display: flex;
		justify-content: center;
		align-self: stretch;
		align-items: center;
		border-right: 1px solid #333;
		box-sizing: border-box;
		background: #535353;
	}

	.layer.selected {
		background: #6a7b92;
	}

	.thumb-shape {
		margin-left: 2px;
		display: flex;
	}

	.thumb-white {
		margin-left: 3px;
		width: 27px;
		height: 32px;
		background: #fff;
		border: 1px solid #111;
		box-sizing: border-box;
	}

	.layer-name {
		margin-left: 8px;
		color: #eee;
		font-size: 12px;
	}

	.layer .italic {
		margin-left: 13px;
		font-style: italic;
		font-weight: bold;
	}

	.layer-lock-ic {
		position: absolute;
		right: 16px;
		top: 13px;
	}

	.layer-scroll {
		flex: 1;
		background: #464646;
		border-left: 1px solid #3a3a3a;
	}

	/* floating history panel */
	.history {
		position: absolute;
		left: 1230px;
		top: 79px;
		width: 211px;
		height: 142px;
		background: #535353;
		border: 1px solid #333;
		box-sizing: border-box;
		display: flex;
		flex-direction: column;
	}

	.history .tab {
		padding: 0 6px;
		color: #ddd;
	}

	.hist-arrows {
		margin-left: auto;
		display: flex;
		padding-right: 5px;
		border-right: 1px solid #666;
	}

	.history .panel-menu {
		margin-left: 4px;
	}

	.hist-main {
		height: 98px;
		flex: none;
		display: flex;
		border-bottom: 1px solid #333;
		box-sizing: border-box;
	}

	.hist-list {
		flex: 1;
	}

	.hist-scroll {
		width: 16px;
		background: #464646;
	}

	.hist-doc {
		display: flex;
		align-items: center;
		height: 41px;
		border-bottom: 3px double #333;
		box-sizing: border-box;
		gap: 6px;
		padding-left: 6px;
		color: #eee;
	}

	.hist-thumb {
		width: 27px;
		height: 32px;
		background: #fff;
		border: 1px solid #111;
		box-sizing: border-box;
	}

	.hist-row {
		display: flex;
		align-items: center;
		height: 23px;
		border-bottom: 1px solid #3a3a3a;
		box-sizing: border-box;
		color: #eee;
		padding-left: 6px;
	}

	.hist-row span {
		margin-left: 14px;
	}

	.hist-row.current {
		background: #6a7b92;
		border-bottom-color: #333;
	}

	.hist-check {
		width: 12px;
		height: 12px;
		border: 1px solid #3f3f3f;
		box-sizing: border-box;
		margin-right: 14px;
	}

	.doc-ic {
		flex: none;
	}

	.hist-foot {
		height: 19px;
		flex: none;
		display: flex;
		align-items: center;
		justify-content: flex-end;
		gap: 16px;
		padding-right: 26px;
		border-bottom: 1px solid #333;
	}

	.hist-grip {
		flex: 1;
		background: #484848;
	}

	/* fill popup */
	.popup {
		position: absolute;
		left: 78px;
		top: 59px;
		width: 245px;
		height: 308px;
		box-sizing: border-box;
		background: #5d5d5d;
		border: 1px solid #404040;
		padding: 16px 16px 0 16px;
	}

	.fill-types {
		position: relative;
		display: flex;
		width: 157px;
		height: 24px;
		margin-left: 1px;
		box-sizing: border-box;
		border: 1px solid #3c3c3c;
		border-radius: 3px;
		background: #606060;
	}

	.ft {
		flex: 1;
		display: flex;
		align-items: center;
		justify-content: center;
		border-right: 1px solid #444;
	}

	.ft:nth-child(4) {
		border: none;
	}

	.ft.on {
		background: #3c3c3c;
	}

	.ft i {
		width: 22px;
		height: 17px;
	}

	.ft-none {
		background: linear-gradient(135deg, #aaa, #d6d6d6);
	}

	.ft-solid {
		background: #000;
		border: 1px solid #eee;
		box-sizing: border-box;
	}

	.ft-grad {
		background: linear-gradient(90deg, #444, #eee);
		border: 1px solid #bbb;
		box-sizing: border-box;
	}

	.ft-pat {
		background: repeating-linear-gradient(135deg, #111 0 3px, #ccc 3px 6px);
	}

	.ft-picker {
		position: absolute;
		left: 187px;
		top: 3px;
		width: 20px;
		height: 15px;
		box-sizing: border-box;
		border: 2px solid #f4f4f4;
		background:
			radial-gradient(circle at 65% 55%, #fff 15%, transparent 75%),
			linear-gradient(135deg, #ffe000, #30e060 35%, #30a0ff 65%, #ff30c0);
	}

	.pop-title {
		margin-top: 10px;
		padding: 6px 1px 0 1px;
		height: 29px;
		box-sizing: border-box;
		border-top: 1px solid #444;
		display: flex;
		align-items: flex-start;
		justify-content: space-between;
		color: #eee;
		width: 212px;
	}

	.pop-gear {
		margin-top: 2px;
	}

	.recent {
		width: 195px;
		height: 15px;
		background: #464646;
		display: flex;
		gap: 1px;
		padding: 2px;
		box-sizing: border-box;
	}

	.recent i {
		width: 11px;
		height: 11px;
	}

	.swatch-box {
		margin-top: 4px;
		width: 211px;
		height: 192px;
		background: #464646;
		border: 2px solid #333;
		box-sizing: border-box;
		display: flex;
	}

	.swatch-grid {
		flex: none;
		width: 192px;
		display: grid;
		grid-template-columns: repeat(16, 11px);
		grid-auto-rows: 11px;
		gap: 1px;
		align-content: start;
		height: 95px;
	}

	.swatch-grid i {
		box-shadow: 0 0 0 1px #333;
	}

	.swatch-scroll {
		flex: 1;
		background: linear-gradient(90deg, #3c3c3c, #4a4a4a, #3c3c3c);
	}

	.pop-grip {
		position: absolute;
		right: 3px;
		bottom: 3px;
	}

	/* annotations */
	.arrows {
		position: absolute;
		left: 0;
		top: 0;
		pointer-events: none;
	}

	.red {
		fill: #f80c0c;
		filter: url(#shadow);
	}

	.watermark {
		position: absolute;
		left: 1249px;
		top: 823px;
		width: 473px;
		height: 113px;
		background: #000;
		display: flex;
	}

	.wm-logo {
		width: 188px;
		height: 113px;
		flex: none;
		background: #0a6cff;
		border-radius: 26px;
		color: #fff;
		font: 600 92px/109px "Open Sans", sans-serif;
		text-align: center;
		letter-spacing: -4px;
	}

	.wm-text {
		flex: 1;
		text-align: center;
		padding-right: 2px;
	}

	.wm-cn {
		margin-top: -2px;
		color: #ff0000;
		font: bold 48px/60px "Noto Sans CJK SC", sans-serif;
		letter-spacing: 2px;
	}

	.wm-url {
		margin-top: 10px;
		color: #1d72ea;
		font: bold 37.5px/40px "Liberation Serif", serif;
	}
</style>
